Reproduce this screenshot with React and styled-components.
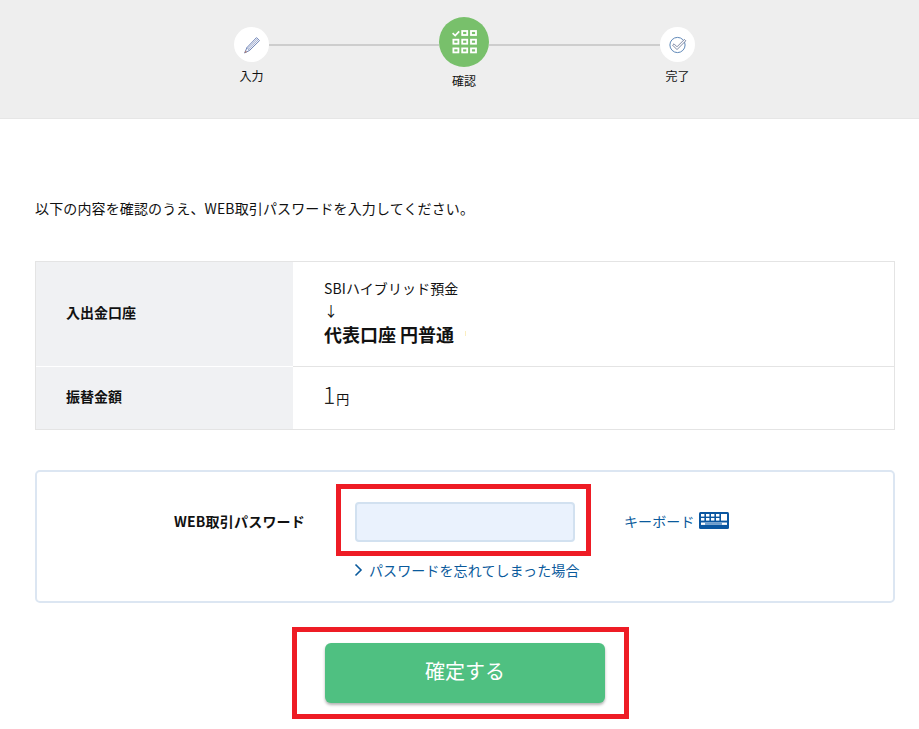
import React from "react";
import styled, { createGlobalStyle } from "styled-components";

const Global = createGlobalStyle`
  html, body { margin: 0; padding: 0; background: #fff; }
  body { font-family: "Noto Sans CJK JP", "Liberation Sans", sans-serif; color: #111; }
`;
const Page = styled.div`
  position: relative;
  width: 919px;
  height: 729px;
  overflow: hidden;
`;
const StepBar = styled.header`
  display: flex;
  align-items: flex-start;
  box-sizing: border-box;
  height: 119px;
  padding: 17px 0 0 234px;
  background: #eeeeee;
  border-bottom: 1px solid #e6e6e6;
`;
const Step = styled.div`
  display: flex;
  flex-direction: column;
  align-items: center;
  flex: none;
  width: ${(p) => (p.$large ? 50 : 35)}px;
  margin-top: ${(p) => (p.$large ? 0 : 10)}px;
`;
const Circle = styled.div`
  display: flex;
  align-items: center;
  justify-content: center;
  width: ${(p) => (p.$large ? 50 : 35)}px;
  height: ${(p) => (p.$large ? 50 : 35)}px;
  border-radius: 50%;
  background: ${(p) => (p.$large ? "#78c06b" : "#fff")};
`;
const StepLabel = styled.span`
  margin-top: 5px;
  font-size: 12px;
  line-height: 18px;
  white-space: nowrap;
`;
const Connector = styled.div`
  flex: none;
  width: ${(p) => p.$w}px;
  height: 2px;
  margin-top: 27px;
  background: #cdcdcd;
`;
const Main = styled.main`
  padding: 79px 24px 0 35px;
`;
const Lead = styled.p`
  margin: 0;
  font-size: 14px;
  letter-spacing: 0.13px;
  line-height: 20px;
`;
const Table = styled.div`
  display: grid;
  grid-template-columns: 257px 1fr;
  margin-top: 43px;
  border: 1px solid #e4e4e4;
`;
const Th = styled.div`
  display: flex;
  align-items: center;
  box-sizing: border-box;
  height: ${(p) => p.$h}px;
  padding: 0 0 4px 30px;
  background: #f0f1f3;
  font-size: 14px;
  font-weight: 700;
  border-top: ${(p) => (p.$first ? "none" : "1px solid #fff")};
`;
const Td = styled.div`
  display: flex;
  flex-direction: column;
  justify-content: center;
  box-sizing: border-box;
  height: ${(p) => p.$h}px;
  padding: 0 0 5px 31px;
  border-top: ${(p) => (p.$first ? "none" : "1px solid #e4e4e4")};
`;
const SmallLine = styled.div`
  font-size: 14px;
  letter-spacing: 0.1px;
  line-height: 22px;
`;
const BigLine = styled.div`
  display: flex;
  align-items: center;
  font-size: 18px;
  font-weight: 700;
  line-height: 26px;
`;
const AccountMark = styled.span`
  width: 1px;
  height: 5px;
  margin-left: 11px;
  background: #fbeec0;
`;
const Amount = styled.div`
  display: flex;
  align-items: baseline;
  margin: 0 0 3px -1px;
`;
const AmountNum = styled.span`
  font-size: 23px;
  font-weight: 300;
  line-height: 30px;
  color: #222;
`;
const AmountUnit = styled.span`
  margin-left: 1px;
  font-size: 13px;
`;
const PasswordPanel = styled.section`
  box-sizing: border-box;
  height: 133px;
  margin-top: 40px;
  padding-top: 30px;
  border: 2px solid #dce6f2;
  border-radius: 5px;
`;
const PasswordRow = styled.div`
  display: flex;
  align-items: center;
  height: 40px;
`;
const PasswordLabel = styled.label`
  box-sizing: border-box;
  width: 268px;
  padding-bottom: 3px;
  text-align: right;
  font-size: 14px;
  letter-spacing: 0.2px;
  font-weight: 700;
`;
const PasswordInput = styled.input`
  box-sizing: border-box;
  width: 220px;
  height: 40px;
  margin-left: 50px;
  background: #eaf2fd;
  border: 2px solid #d2e1f0;
  border-radius: 4px;
`;
const KeyboardLink = styled.a`
  display: flex;
  align-items: center;
  gap: 4px;
  margin: 0 0 3px 49px;
  font-size: 14px;
  letter-spacing: 0.1px;
  color: #0a5a9c;
`;
const ForgotLink = styled.a`
  display: flex;
  align-items: center;
  gap: 6px;
  margin: 18px 0 0 317px;
  font-size: 14px;
  letter-spacing: 0.1px;
  line-height: 20px;
  color: #0a5a9c;
`;
const ButtonRow = styled.div`
  display: flex;
  justify-content: center;
  margin-top: 40px;
`;
const Confirm = styled.button`
  width: 280px;
  height: 60px;
  padding: 0 0 5px;
  border: none;
  border-radius: 6px;
  background: #4fc081;
  box-shadow: 0 2px 3px rgba(0, 0, 0, 0.3);
  color: #fff;
  font-family: inherit;
  font-size: 20px;
`;
const Highlight = styled.div`
  position: absolute;
  box-sizing: border-box;
  left: ${(p) => p.$x}px;
  top: ${(p) => p.$y}px;
  width: ${(p) => p.$w}px;
  height: ${(p) => p.$h}px;
  border: 5px solid #ee1c25;
  pointer-events: none;
`;

const Pencil = () => (
  <svg width="20" height="20" viewBox="0 0 20 20" fill="none">
    <path d="M5 12.5 14.5 2.6l3 3L7.6 15.4 2.6 18z" fill="#f6f7fb" stroke="#7186b8" strokeWidth="1" />
    <path d="M6.2 13.2 15.5 3.6M7 14.2 16.4 4.6" stroke="#8a9ac4" strokeWidth="0.7" />
    <path d="M5 12.5l2.6 2.9" stroke="#7186b8" strokeWidth="0.8" />
    <path d="M2.6 18l.9-2.4 1.5 1.3z" fill="#b9806f" />
  </svg>
);
const Grid = () => {
  const cells = [];
  for (let r = 0; r < 3; r++) for (let c = 0; c < 3; c++) {
    if (r === 0 && c === 0) continue;
    cells.push(<rect key={`${r}${c}`} x={1.4 + c * 8.8} y={1 + r * 8.7} width="5" height="4" stroke="#fff" strokeWidth="1.8" fill="none" />);
  }
  return (
    <svg width="25" height="25" viewBox="0 0 25 25">
      {cells}
      <path d="M0.6 3.2l2.6 2.4 4-4.2" stroke="#fff" strokeWidth="1.7" fill="none" />
    </svg>
  );
};
const CheckCircle = () => (
  <svg width="18" height="18" viewBox="0 0 18 18" fill="none">
    <circle cx="8.5" cy="9" r="7.6" stroke="#5f88b8" strokeWidth="1" />
    <path d="M5 7.8 8 10.8 15.4 3.4 16.8 4.8 8 13.6 3.6 9.2z" fill="#fbfbfd" stroke="#75809c" strokeWidth="0.9" />
  </svg>
);
const KeyboardIcon = () => (
  <svg width="30" height="17" viewBox="0 0 30 17">
    <rect width="30" height="17" rx="1.5" fill="#0a56a0" />
    {[0, 1, 2, 3].map((i) => <rect key={i} x={2 + i * 5} y="2" width="3.4" height="2.6" fill="#fff" />)}
    {[0, 1, 2, 3].map((i) => <rect key={i} x={2 + i * 5} y="6" width="3.4" height="2.6" fill="#fff" />)}
    <rect x="22" y="2" width="6" height="6.6" fill="#fff" />
    <rect x="2" y="10.5" width="26" height="2.4" fill="#fff" />
    <rect x="6" y="10.5" width="17" height="2.4" fill="#6d9ccb" />
  </svg>
);
const Chevron = () => (
  <svg width="9" height="14" viewBox="0 0 9 14" fill="none">
    <path d="M1.5 1.5 7 7l-5.5 5.5" stroke="#0a5a9c" strokeWidth="1.6" />
  </svg>
);

export default function App() {
  return (
    <Page>
      <Global />
      <StepBar>
        <Step><Circle><Pencil /></Circle><StepLabel>入力</StepLabel></Step>
        <Connector $w={170} />
        <Step $large><Circle $large><Grid /></Circle><StepLabel>確認</StepLabel></Step>
        <Connector $w={171} />
        <Step><Circle><CheckCircle /></Circle><StepLabel>完了</StepLabel></Step>
      </StepBar>
      <Main>
        <Lead>以下の内容を確認のうえ、WEB取引パスワードを入力してください。</Lead>
        <Table>
          <Th $first $h={104}>入出金口座</Th>
          <Td $first $h={104}>
            <SmallLine>SBIハイブリッド預金</SmallLine>
            <SmallLine>↓</SmallLine>
            <BigLine>代表口座 円普通<AccountMark /></BigLine>
          </Td>
          <Th $h={63}>振替金額</Th>
          <Td $h={63}>
            <Amount><AmountNum>1</AmountNum><AmountUnit>円</AmountUnit></Amount>
          </Td>
        </Table>
        <PasswordPanel>
          <PasswordRow>
            <PasswordLabel>WEB取引パスワード</PasswordLabel>
            <PasswordInput type="password" />
            <KeyboardLink>キーボード<KeyboardIcon /></KeyboardLink>
          </PasswordRow>
          <ForgotLink><Chevron />パスワードを忘れてしまった場合</ForgotLink>
        </PasswordPanel>
        <ButtonRow><Confirm>確定する</Confirm></ButtonRow>
      </Main>
      <Highlight $x={336} $y={484} $w={255} $h={72} />
      <Highlight $x={292} $y={627} $w={337} $h={92} />
    </Page>
  );
}
